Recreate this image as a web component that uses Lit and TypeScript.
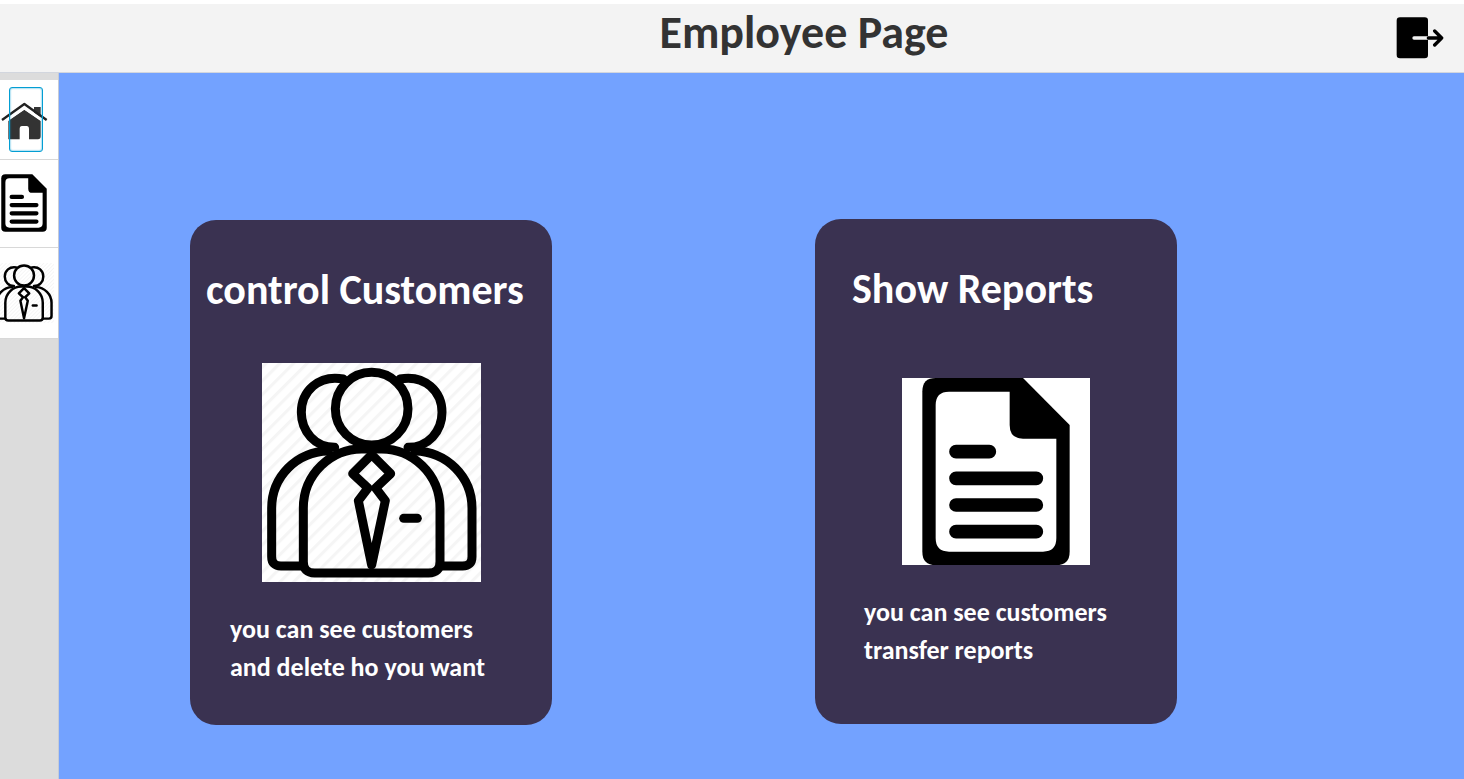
import { LitElement, html, css, svg } from "lit";
import { customElement } from "lit/decorators.js";

const house = svg`
  <path fill="#333" d="M104 141h20v35l-20-15z"/>
  <path fill="#333" d="M27 181 75 149l49 33v47q0 9-8 9H89v-31q0-9-7-9H68q-7 0-7 9v31H27z"/>
  <path fill="none" stroke="#fff" stroke-width="9" d="M10 189 75 143l66 46"/>
  <path fill="none" stroke="#222" stroke-width="7" stroke-linejoin="round" d="M8 180 75 132l67 48"/>`;

const report = svg`
  <path fill="#fff" d="M36 24h564v561H36z"/>
  <path d="M137 24H399L539 165V545Q539 585 499 585H137Q97 585 97 545V64Q97 24 137 24z"/>
  <path fill="#fff" d="M177 65H359V165Q359 206 399 206H499V505Q499 545 459 545H177Q137 545 137 505V105Q137 65 177 65z"/>
  <path fill="none" stroke="#000" stroke-width="41" stroke-linecap="round"
    d="M198 245H298M198 325H439M198 405H439M198 485H439"/>`;

const people = svg`
  <defs>
    <pattern id="hatch" width="29" height="29" patternUnits="userSpaceOnUse" patternTransform="rotate(45)">
      <path fill="#fff" d="M0 0h29v29H0z"/>
      <path fill="#f5f5f5" d="M0 0h9v29H0z"/>
    </pattern>
  </defs>
  <path fill="url(#hatch)" d="M36 39h657v657H36z"/>
  <g fill="none" stroke="#000" stroke-width="27" stroke-linecap="round" stroke-linejoin="round">
    <circle cx="365" cy="176" r="109"/>
    <path d="M280 87C205 73 154 125 154 187C154 244 195 292 254 292"/>
    <path d="M450 87C525 73 576 125 576 187C576 244 535 292 474 292"/>
    <path d="M235 303C140 305 65 380 65 475V620Q65 648 93 648H158"/>
    <path d="M495 303C590 305 666 380 666 475V620Q666 648 638 648H572"/>
    <path d="M160 475C160 370 245 297 335 297H395C485 297 570 370 570 475V635Q570 669 536 669H194Q160 669 160 635z"/>
    <path d="M365 314 308 371 354 414 325 452 365 645 406 452 377 414 422 371z"/>
    <path d="M461 505H502"/>
  </g>`;

const exit = svg`
  <rect x="79" y="54" width="94" height="123" rx="10"/>
  <path fill="none" stroke="#f3f3f3" stroke-width="10" stroke-linecap="round" d="M131 116H173"/>
  <path fill="none" stroke="#000" stroke-width="10" stroke-linecap="round" stroke-linejoin="round"
    d="M174 116H214M193 95 214 116 193 137"/>`;

@customElement("app-root")
export class AppRoot extends LitElement {
  static styles = css`
    :host {
      display: flex;
      flex-direction: column;
      min-height: 100vh;
      background: #fff;
      font-family: Calibri, Carlito, Lato, "Liberation Sans", sans-serif;
      font-weight: 700;
    }
    * {
      box-sizing: border-box;
    }
    h1, h2, p {
      margin: 0;
    }
    svg {
      display: block;
      flex: none;
    }
    button {
      border: 0;
      margin: 0;
      padding: 0;
      background: none;
    }
    .header {
      display: grid;
      grid-template-columns: 1fr auto 1fr;
      align-items: center;
      height: 69px;
      margin-top: 4px;
      padding: 0 20px 0 164px;
      background: #f3f3f3;
      border-bottom: 1px solid #d2d6de;
    }
    .title {
      grid-column: 2;
      padding-bottom: 12px;
      font-size: 46px;
      line-height: 48px;
      color: #333;
    }
    .exit {
      justify-self: end;
    }
    .body {
      display: flex;
      flex: 1;
    }
    .sidebar {
      width: 59px;
      padding-top: 7px;
      background: #dcdcdc;
      border-right: 1px solid #c6cbd6;
      overflow: hidden;
    }
    .nav {
      position: relative;
      display: flex;
      align-items: center;
      justify-content: center;
      width: 100%;
      height: 88px;
      padding: 0 10px 2px 0;
      background: #fff;
      border-bottom: 1px solid #d8d8d8;
      overflow: hidden;
    }
    .home {
      height: 80px;
      padding-bottom: 0;
    }
    .people {
      height: 91px;
      padding-bottom: 0;
    }
    .focus {
      position: absolute;
      left: 9px;
      top: 7px;
      width: 34px;
      height: 65px;
      border: 1px solid #039ed3;
      border-radius: 3px;
      box-shadow: inset 0 0 2px #039ed3;
    }
    .main {
      flex: 1;
      display: grid;
      grid-template-columns: 131fr 362fr 263fr 362fr 287fr;
      align-items: start;
      padding: 146px 0 53px;
      background: #73a2ff;
    }
    .card {
      display: flex;
      flex-direction: column;
      height: 505px;
      border-radius: 26px;
      background: #3a3251;
      color: #fff;
    }
    .customers {
      grid-column: 2;
      margin-top: 1px;
      padding: 46px 16px 0;
    }
    .reports {
      grid-column: 4;
      padding: 46px 37px 0;
    }
    .name {
      font-size: 42px;
      line-height: 48px;
      white-space: nowrap;
    }
    .picture {
      align-self: center;
      margin-top: 49px;
    }
    .reports .picture {
      margin-top: 65px;
    }
    .text {
      margin-top: 28px;
      padding-left: 24px;
      font-size: 26px;
      line-height: 38px;
      white-space: nowrap;
    }
    .reports .text {
      padding-left: 12px;
    }
  `;

  render() {
    return html`
      <header class="header">
        <h1 class="title">Employee Page</h1>
        <button class="exit" aria-label="Log out">
          <svg width="48" height="42" viewBox="77 53 144 126">${exit}</svg>
        </button>
      </header>
      <div class="body">
        <nav class="sidebar">
          <button class="nav home" aria-label="Home">
            <svg width="48" height="60" viewBox="2 90 144 180">${house}</svg>
            <span class="focus"></span>
          </button>
          <button class="nav" aria-label="Reports">
            <svg width="58" height="58" viewBox="36 24 564 561">${report}</svg>
          </button>
          <button class="nav people" aria-label="Customers">
            <svg width="60" height="60" viewBox="36 39 657 657">${people}</svg>
          </button>
        </nav>
        <main class="main">
          <section class="card customers">
            <h2 class="name">control Customers</h2>
            <svg class="picture" width="219" height="219" viewBox="36 39 657 657">${people}</svg>
            <p class="text">you can see customers<br />and delete ho you want</p>
          </section>
          <section class="card reports">
            <h2 class="name">Show Reports</h2>
            <svg class="picture" width="188" height="187" viewBox="36 24 564 561">${report}</svg>
            <p class="text">you can see customers<br />transfer reports</p>
          </section>
        </main>
      </div>
    `;
  }
}
